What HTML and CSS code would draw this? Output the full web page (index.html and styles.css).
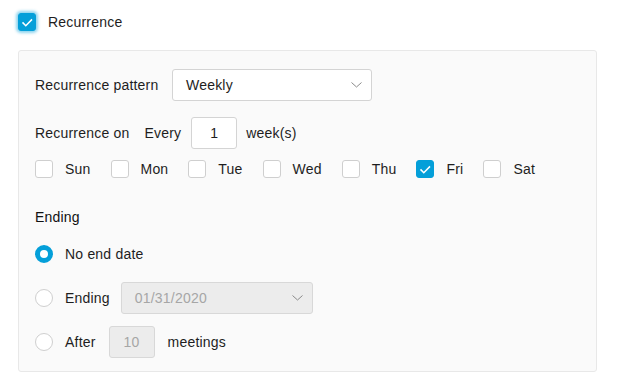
FILE: index.html
```html
<!DOCTYPE html>
<html>
<head>
<meta charset="utf-8">
<link rel="stylesheet" href="styles.css">
</head>
<body>
<div class="header">
  <span class="cb cb-on cb-glow"><svg viewBox="1 1 16 16" width="16" height="16"><polyline points="4.5,9.4 7.8,12.7 14,6.4" fill="none" stroke="#fff" stroke-width="1.5"/></svg></span>
  <span class="header-label">Recurrence</span>
</div>
<div class="panel">
  <div class="row row-pattern">
    <span class="label">Recurrence pattern</span>
    <div class="select">
      <span>Weekly</span>
      <svg class="chev" viewBox="0 0 11 6" width="11" height="6"><polyline points="0.5,0.5 5.5,5 10.5,0.5" fill="none" stroke="#8a8a8a" stroke-width="1"/></svg>
    </div>
  </div>
  <div class="row row-on">
    <span class="label">Recurrence on</span>
    <span class="every">Every</span>
    <div class="num">1</div>
    <span class="weeks">week(s)</span>
  </div>
  <div class="row days">
    <label class="day"><span class="cb"></span><span>Sun</span></label>
    <label class="day"><span class="cb"></span><span>Mon</span></label>
    <label class="day"><span class="cb"></span><span>Tue</span></label>
    <label class="day"><span class="cb"></span><span>Wed</span></label>
    <label class="day"><span class="cb"></span><span>Thu</span></label>
    <label class="day"><span class="cb cb-on"><svg viewBox="1 1 16 16" width="16" height="16"><polyline points="4.5,9.4 7.8,12.7 14,6.4" fill="none" stroke="#fff" stroke-width="1.5"/></svg></span><span>Fri</span></label>
    <label class="day"><span class="cb"></span><span>Sat</span></label>
  </div>
  <div class="ending-title">Ending</div>
  <div class="row radio-row">
    <span class="radio radio-on"></span>
    <span class="rlabel">No end date</span>
  </div>
  <div class="row radio-row">
    <span class="radio"></span>
    <span class="rlabel r-ending">Ending</span>
    <div class="select select-disabled">
      <span>01/31/2020</span>
      <svg class="chev" viewBox="0 0 11 6" width="11" height="6"><polyline points="0.5,0.5 5.5,5 10.5,0.5" fill="none" stroke="#8a8a8a" stroke-width="1"/></svg>
    </div>
  </div>
  <div class="row radio-row">
    <span class="radio"></span>
    <span class="rlabel r-after">After</span>
    <div class="num num-disabled">10</div>
    <span class="meetings">meetings</span>
  </div>
</div>
</body>
</html>
```
FILE: styles.css
```css
* { box-sizing: border-box; }
body {
  margin: 0;
  background: #fff;
  font-family: "Liberation Sans", Arial, sans-serif;
  font-size: 14px;
  letter-spacing: 0.2px;
  color: #1e1e1e;
}
.header {
  display: flex;
  align-items: center;
  padding: 13px 0 0 18px;
  height: 31px;
}
.header-label { margin-left: 12px; }
.cb {
  width: 18px;
  height: 18px;
  border: 1px solid #cfcfcf;
  border-radius: 3px;
  background: #fff;
  display: inline-flex;
  align-items: center;
  justify-content: center;
  flex: none;
}
.cb svg { display: block; flex: none; }
.cb-on {
  background: #049fd9;
  border-color: #049fd9;
}
.cb-glow {
  box-shadow: 0 0 3px 2px rgba(4, 159, 217, 0.45);
}
.panel {
  margin: 19px 0 0 18px;
  width: 579px;
  border: 1px solid #e8e8e8;
  border-radius: 3px;
  background: #fafafa;
  padding: 18px 16px 13px 16px;
}
.row {
  display: flex;
  align-items: center;
  height: 32px;
}
.row-pattern .label { width: 137px; }
.select {
  width: 200px;
  height: 32px;
  border: 1px solid #d4d4d4;
  border-radius: 3px;
  background: #fff;
  display: flex;
  align-items: center;
  justify-content: space-between;
  padding: 0 9px 0 13px;
}
.chev { display: block; }
.row-on { margin-top: 16px; }
.every { margin-left: 15px; }
.num {
  width: 46px;
  height: 32px;
  border: 1px solid #d4d4d4;
  border-radius: 3px;
  background: #fff;
  display: flex;
  align-items: center;
  justify-content: center;
  margin-left: 10px;
}
.weeks { margin-left: 9px; }
.days { margin-top: 4px; }
.day {
  display: flex;
  align-items: center;
  margin-right: 20px;
}
.day .cb { margin-right: 12px; }
.ending-title {
  margin-top: 22px;
  height: 20px;
  line-height: 20px;
  color: #111;
}
.radio-row { margin-top: 12px; }
.ending-title + .radio-row { margin-top: 11px; }
.radio {
  width: 18px;
  height: 18px;
  border-radius: 50%;
  border: 1px solid #cfcfcf;
  background: #fff;
  flex: none;
}
.radio-on {
  border: 5px solid #049fd9;
}
.rlabel { margin-left: 12px; }
.r-ending { margin-right: 11px; }
.r-after { margin-right: 3px; }
.select-disabled {
  width: 192px;
  background: #ececec;
  border-color: #d8d8d8;
  color: #a6a6a6;
}
.num-disabled {
  background: #ececec;
  border-color: #d8d8d8;
  color: #a6a6a6;
}
.meetings { margin-left: 13px; }
```
